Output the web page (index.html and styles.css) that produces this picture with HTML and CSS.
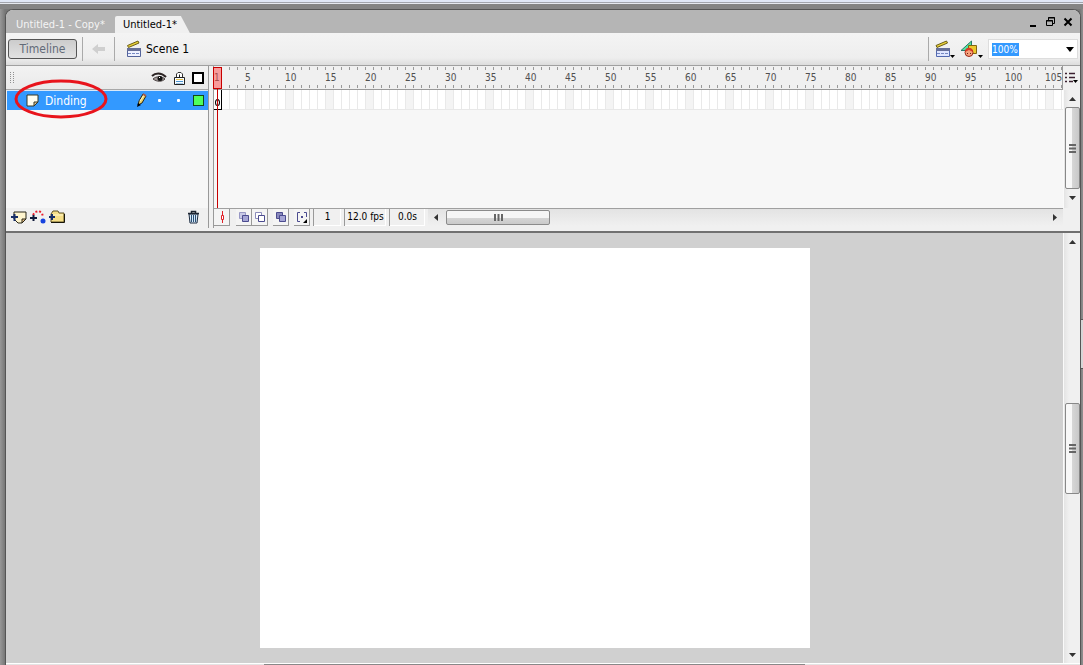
FILE: index.html
```
<!DOCTYPE html>
<html lang="en">
<head>
<meta charset="utf-8">
<title>Untitled-1*</title>
<link rel="stylesheet" href="styles.css">
</head>
<body>
<div class="backdrop"></div>
<button class="dock-handle" aria-label="Expand panels"></button>
<main class="window">
  <header class="tabs">
    <button class="tab">Untitled-1 - Copy*</button>
    <button class="tab tab-active">Untitled-1*</button>
    <div class="window-buttons">
      <button aria-label="Minimize"><svg width="10" height="12"><path d="M2 10h6" stroke="#000" stroke-width="2"/></svg></button>
      <button aria-label="Restore"><svg width="11" height="12" fill="none" stroke="#000"><path d="M3.500 4V1.500h6v6H8M3 2h7"/><path d="M1.500 4.500h6v5h-6zM1 5h7"/></svg></button>
      <button aria-label="Close"><svg width="10" height="12"><path d="M1.500 2.500l7 7m0-7l-7 7" stroke="#000" stroke-width="2"/></svg></button>
    </div>
  </header>

  <nav class="toolbar">
    <button class="timeline-toggle">Timeline</button>
    <span class="rule"></span>
    <button class="back" aria-label="Back"><svg width="13" height="10"><path d="M0 5l6-5v3h7v4H6v3z" fill="#cfcfcf"/></svg></button>
    <span class="rule"></span>
    <button class="scene">
      <svg width="16" height="18"><path d="M1.500 8.500h13v8h-13z" fill="#eef1ff" stroke="#53639b"/><path d="M1 8h14v3H1z" fill="#666f98"/><path d="M2 13.500h12" stroke="#7689c3" stroke-dasharray="3 1"/><path d="M1.500 5.500L12 1l1 2L2.500 7.500z" fill="#ead238" stroke="#6b5d18"/></svg>
      Scene 1</button>
    <div class="toolbar-right">
      <span class="rule"></span>
      <button aria-label="Edit scene"><svg width="21" height="20"><path d="M2.500 9.500h13v8h-13z" fill="#dfe6ff" stroke="#5269b0"/><path d="M2 9h14v3H2z" fill="#666f98"/><path d="M3 14.500h12" stroke="#7689c3" stroke-dasharray="3 1"/><path d="M2 6.500L12.500 2l1 2L3 8.500z" fill="#ead238" stroke="#6b5d18"/><path d="M16 16h5l-2.500 3z"/></svg></button>
      <button aria-label="Edit symbols"><svg width="23" height="20"><path d="M1 11.500L11.500 2v9.500z" fill="#54e4a2" stroke="#287a68"/><path d="M8.500 6.500h8v8h-8z" fill="#ecc62c" stroke="#806614"/><circle cx="9" cy="13.500" r="4" fill="#f7a27c" stroke="#9b291a"/><path d="M5 13c0-5 7-6 8 0l-4-2z" fill="#d93924"/><path d="M7 14.500h1m2 0h1" stroke="#642315"/><path d="M18 16h5l-2.500 3z"/></svg></button>
      <div class="zoom-box">
        <input aria-label="Zoom" value="100%">
        <button aria-label="Zoom levels"><svg width="8" height="5"><path d="M0 0h8L4 5z"/></svg></button>
      </div>
    </div>
  </nav>

  <section class="timeline" aria-label="Timeline">
    <div class="layers">
      <div class="layer-head">
        <svg class="grip" width="6" height="12"><path d="M1.500 0v12M4.500 0v12" stroke="#909090" stroke-dasharray="1 1"/></svg>
        <button aria-label="Show or hide all"><svg width="16" height="12"><path d="M1 4c3-3 9-4 14 1" fill="none" stroke="#2c2424" stroke-width="2"/><path d="M2 7c3-3 9-3 12 0-3 3-8 3-12 0z" fill="#a49c9c" stroke="#4c4444"/><circle cx="9" cy="6.500" r="2.500" fill="#111"/><path d="M8 5.500h1" stroke="#fff"/></svg></button>
        <button aria-label="Lock or unlock all"><svg width="11" height="14"><path d="M2.500 6V3l1.500-1.500h3L8.500 3v3" fill="#fff" stroke="#333"/><path d="M5.500 3.500v3" stroke="#222"/><path d="M.5 6.500h10v7H.5z" fill="#f6fbff" stroke="#222"/><path d="M2 8.500h7" stroke="#e3c14f"/><path d="M2 10.500h7" stroke="#4e94cf"/><path d="M2 12.500h7" stroke="#9dc6e6"/></svg></button>
        <button aria-label="Outline all layers"><span class="outline-box"></span></button>
      </div>
      <div class="layer">
        <svg width="14" height="13"><path d="M1 1h11v7l-4 4H1z" fill="#fffef1" stroke="#353827"/><path d="M12 8l-4 4V8z" fill="#e3c591" stroke="#353827"/></svg>
        <span class="layer-name">Dinding</span>
        <svg width="12" height="15"><path d="M2 12l1-4 4-7 3 2-4 7z" fill="#eed267" stroke="#27251a"/><path d="M4 8l4-6" stroke="#fff9cf"/><path d="M1 14l1-4 3 2z"/><path d="M7 1l3 2" stroke="#a85b4b" stroke-width="2"/></svg>
        <span class="dot"></span>
        <span class="dot"></span>
        <span class="colour-box"></span>
      </div>
      <div class="empty"></div>
      <div class="layer-tools">
        <button aria-label="Insert layer"><svg width="16" height="14"><path d="M3 2h12v7l-4 4H7L3 9z" fill="#fff5ce" stroke="#292719"/><path d="M15 9l-4 4V9z" fill="#e7bb82" stroke="#292719"/><path d="M0 7h7M3.500 4v7" stroke="#162d68" stroke-width="2"/></svg></button>
        <button aria-label="Add motion guide"><svg width="16" height="14"><path d="M3 5l2-3 4-1 3 2 1 4" fill="none" stroke="#eb1d2d" stroke-width="2" stroke-dasharray="2 2"/><path d="M0 8h7M3.500 5v6" stroke="#111a3a" stroke-width="2"/><circle cx="13" cy="11" r="2.500" fill="#1743df"/></svg></button>
        <button aria-label="Insert layer folder"><svg width="16" height="14"><path d="M2 4l2-3h5l1 2h5v9H2z" fill="#f6df88" stroke="#5c5124"/><path d="M3 5h11" stroke="#fff8cc"/><path d="M2 12.500h13.500V4" fill="none" stroke="#171408"/><path d="M0 7h6M3 4v6" stroke="#162d68" stroke-width="2"/></svg></button>
        <button class="trash" aria-label="Delete layer"><svg width="13" height="14"><path d="M2 4h9l-1 9H3z" fill="#d8eafa" stroke="#1e2d42"/><path d="M4.500 5v7M6.500 5v7M8.500 5v7" stroke="#294f75"/><path d="M1 3.500h11M4.500 3V1.500h4V3" fill="none" stroke="#1c2430" stroke-width="1.500"/></svg></button>
      </div>
    </div>

    <div class="frames">
      <div class="ruler">
        <span class="first">1</span><span>5</span><span>10</span><span>15</span><span>20</span><span>25</span><span>30</span><span>35</span><span>40</span><span>45</span><span>50</span><span>55</span><span>60</span><span>65</span><span>70</span><span>75</span><span>80</span><span>85</span><span>90</span><span>95</span><span>100</span><span>105</span>
      </div>
      <div class="track"><span class="keyframe"></span></div>
      <div class="empty"></div>
      <div class="playhead"></div>
      <div class="status">
        <button class="tool" aria-label="Center frame"><svg width="14" height="14"><path d="M7.500 1v12" stroke="#e02028"/><path d="M6.500 5.500h2v4h-2z" fill="#fff" stroke="#e02028"/></svg></button>
        <span class="tool-group">
          <button class="tool" aria-label="Onion skin"><svg width="14" height="14"><path d="M2.500 2.500h6v6h-6z" fill="#c8c9e6" stroke="#9797c4"/><path d="M5.500 5.500h6v6h-6z" fill="#a5a5d5" stroke="#4b4b8f"/></svg></button>
          <button class="tool" aria-label="Onion skin outlines"><svg width="14" height="14"><path d="M2.500 2.500h6v6h-6z" fill="#fff" stroke="#8b8bbb"/><path d="M5.500 5.500h6v6h-6z" fill="#fff" stroke="#4b4b8f"/></svg></button>
        </span>
        <button class="tool" aria-label="Edit multiple frames"><svg width="14" height="14"><path d="M2.500 2.500h6v6h-6z" fill="#8989bd" stroke="#4b4b8f"/><path d="M5.500 5.500h6v6h-6z" fill="#a5a5d5" stroke="#4b4b8f"/></svg></button>
        <button class="tool" aria-label="Modify onion markers"><svg width="14" height="14"><path d="M5 2.500H2.500v9H5M9 2.500h2.500V7" fill="none" stroke="#4b4b8f"/><path d="M6 6h2v2H6z" fill="#4b4b8f"/><path d="M12 9v4H8z"/></svg></button>
        <output class="field frame-no">1</output>
        <output class="field rate">12.0 fps</output>
        <output class="field elapsed">0.0s</output>
        <div class="hscroll">
          <button aria-label="Scroll left"><svg width="4" height="7"><path d="M4 0v7L0 3.500z" fill="#333"/></svg></button>
          <div class="hthumb"><svg width="9" height="7"><path d="M1 0v7M4.500 0v7M8 0v7" stroke="#666" stroke-width="2"/></svg></div>
          <button class="scroll-right" aria-label="Scroll right"><svg width="4" height="7"><path d="M0 0v7l4-3.500z" fill="#333"/></svg></button>
        </div>
      </div>
    </div>

    <div class="timeline-side">
      <button class="view-menu" aria-label="Frame view"><svg width="13" height="12"><path d="M0 1.500h2M0 5.500h2M0 9.500h2M4 1.500h6M4 5.500h6M4 9.500h4" stroke="#3b2030" stroke-width="1.500"/><path d="M8 8h5l-2.500 3z"/></svg></button>
      <div class="vscroll">
        <button aria-label="Scroll up"><svg width="7" height="4"><path d="M0 4h7L3.500 0z" fill="#333"/></svg></button>
        <div class="vthumb"><svg width="7" height="9"><path d="M0 1h7M0 4.500h7M0 8h7" stroke="#666" stroke-width="2"/></svg></div>
        <button aria-label="Scroll down"><svg width="7" height="4"><path d="M0 0h7L3.500 4z" fill="#333"/></svg></button>
      </div>
    </div>
  </section>

  <section class="workspace" aria-label="Stage">
    <div class="pasteboard"><div class="stage"></div></div>
    <div class="vscroll">
      <button aria-label="Scroll up"><svg width="7" height="4"><path d="M0 4h7L3.500 0z" fill="#333"/></svg></button>
      <div class="vthumb"><svg width="7" height="9"><path d="M0 1h7M0 4.500h7M0 8h7" stroke="#666" stroke-width="2"/></svg></div>
      <button aria-label="Scroll down"><svg width="7" height="4"><path d="M0 0h7L3.500 4z" fill="#333"/></svg></button>
    </div>
  </section>
  <div class="bottom-scroll"><span></span></div>
  <svg class="annotation" width="94" height="41"><ellipse cx="47" cy="20" rx="45" ry="18" fill="none" stroke="#e8141c" stroke-width="3"/></svg>
</main>
</body>
</html>
```

FILE: styles.css
```
* { box-sizing: border-box; }
body {
  margin: 0;
  height: 100vh;
  overflow: hidden;
  display: flex;
  flex-direction: column;
  position: relative;
  background: linear-gradient(90deg, #989898, #777 5px, #777 calc(100% - 3px), #909090);
  font: 11px/14px Tahoma, "DejaVu Sans Condensed", "DejaVu Sans", sans-serif;
  color: #000;
}
button {
  border: 0;
  padding: 0;
  background: none;
  font: inherit;
  color: inherit;
  display: flex;
  align-items: center;
  justify-content: center;
}
svg { display: block; flex: none; }
.backdrop {
  height: 9px;
  flex: none;
  border-top: 2px solid #e0e7f6;
  background: linear-gradient(#a2a5ad 1px, #e6e9f0 1px, #e6e9f0 2px, #848484 2px);
}
.dock-handle {
  position: absolute;
  right: 0;
  top: 319px;
  width: 3px;
  height: 50px;
  background: #d6d6d6;
  border: solid #555;
  border-width: 1px 0;
}
.window {
  flex: 1;
  min-height: 0;
  margin: 0 2px 0 5px;
  border: 1px solid #555;
  border-bottom: 0;
  border-radius: 8px 8px 0 0;
  background: #f0f0f0;
  display: flex;
  flex-direction: column;
  position: relative;
}

.tabs {
  height: 23px;
  flex: none;
  display: flex;
  align-items: flex-end;
  background: #b5b5b5;
  border-radius: 7px 7px 0 0;
}
.tab { height: 17px; padding: 0 10px; color: #f4f4f4; }
.tab-active {
  padding: 0 13px 0 8px;
  color: #000;
  background: #f0f0f0;
  border-radius: 2px 0 0 0;
  clip-path: polygon(0 0, calc(100% - 9px) 0, 100% 100%, 0 100%);
}
.window-buttons { margin-left: auto; display: flex; gap: 7px; padding: 0 7px 5px 0; }

.toolbar {
  height: 33px;
  flex: none;
  display: flex;
  align-items: center;
  gap: 5px;
  padding: 0 2px;
  background: linear-gradient(#f4f4f4, #eee 25px, #dcdcdc);
  border-bottom: 1px solid #a0a0a0;
  font-size: 12px;
}
.timeline-toggle {
  width: 69px;
  height: 20px;
  border: 1px solid #555;
  border-radius: 3px;
  background: linear-gradient(#ccc, #e2e2e2);
  color: #626a78;
}
.rule { width: 1px; height: 24px; background: #aaa; }
.back { width: 21px; height: 24px; }
.scene { gap: 4px; padding-left: 6px; }
.toolbar-right { margin-left: auto; display: flex; align-items: center; gap: 5px; }
.zoom-box {
  width: 90px;
  height: 20px;
  display: flex;
  align-items: center;
  padding: 0 3px;
  border: 1px solid #ddd;
  background: #fff;
}
.zoom-box input {
  width: 27px;
  height: 13px;
  padding: 0;
  border: 0;
  background: #3399ff;
  color: #fff;
  font: 10px/13px Tahoma, "DejaVu Sans Condensed", sans-serif;
}
.zoom-box button { margin-left: auto; }

.timeline {
  height: 167px;
  flex: none;
  display: grid;
  grid-template-columns: 203px minmax(0, 1fr) 17px;
  border-bottom: 2px solid #707070;
}
.layers {
  height: 162px;
  display: grid;
  grid-template-rows: 24px 20px 1fr 20px;
  border-right: 1px solid #999;
}
.layer-head {
  display: flex;
  align-items: center;
  gap: 7px;
  padding: 0 4px 0 3px;
  border-bottom: 1px solid #a8a8a8;
  background: linear-gradient(#f2f2f2, #eaeaea);
}
.grip { margin-right: auto; }
.layer-head button { min-width: 11px; }
.outline-box { width: 12px; height: 12px; border: 2px solid #000; background: #fff; }
.layer {
  display: flex;
  align-items: center;
  margin-left: 1px;
  padding: 0 4px 0 19px;
  border-top: 1px solid #d8e8f8;
  background: #3399ff;
  color: #fff;
  font-size: 12px;
}
.layer-name { flex: 1; padding-left: 5px; }
.dot { width: 3px; height: 3px; margin-left: 10px; border-radius: 1px; background: #fff; }
.dot + .dot { margin-left: 16px; }
.colour-box { width: 11px; height: 11px; margin-left: 13px; border: 1px solid #124816; background: #4fff5c; }
.empty { background: #f7f7f7; }
.layer-tools { display: flex; align-items: center; gap: 3px; padding: 0 8px 2px 5px; }
.trash { margin-left: auto; }

.frames {
  height: 162px;
  margin-left: 4px;
  display: grid;
  grid-template-rows: 24px 20px 1fr 20px;
  grid-template-columns: minmax(0, 1fr);
  position: relative;
  border-left: 1px solid #999;
}
.ruler {
  display: flex;
  align-items: center;
  overflow: hidden;
  border-right: 1px solid #999;
  border-bottom: 1px solid #999;
  color: #505050;
  font-size: 10px;
  background:
    repeating-linear-gradient(90deg, transparent 0 7px, #999 7px 8px) 0 1px / 100% 3px no-repeat,
    repeating-linear-gradient(90deg, transparent 0 7px, #999 7px 8px) 0 19px / 100% 3px no-repeat,
    #f0f0f0;
}
.ruler span { flex: 0 0 40px; }
.ruler .first { flex-basis: 31px; }
.track {
  border-bottom: 1px solid #e8e8e8;
  background:
    repeating-linear-gradient(90deg, transparent 0 7px, #e9e9e9 7px 8px),
    repeating-linear-gradient(90deg, #fff 0 32px, #f4f4f4 32px 40px);
}
.keyframe {
  display: flex;
  width: 8px;
  height: 20px;
  padding: 0 1px 3px;
  align-items: flex-end;
  border: solid #000;
  border-width: 0 1px 1px 0;
}
.keyframe::before { content: ""; width: 5px; height: 5px; border: 1px solid #000; border-radius: 50%; }
.track { background-position: 0 0; }
.playhead {
  position: absolute;
  left: -1px;
  top: 1px;
  width: 9px;
  height: 22px;
  border: 1px solid #c80000;
  background: rgba(255, 72, 72, .5);
}
.playhead::after { content: ""; position: absolute; left: 3px; top: 21px; width: 1px; height: 119px; background: #c80000; }

.status { display: flex; align-items: stretch; padding-bottom: 2px; border-top: 1px solid #a0a0a0; }
.tool {
  width: 16px;
  border: solid #999;
  border-width: 0 1px 1px 0;
  background: #f4f4f4;
}
.tool-group { display: flex; margin: 0 5px 0 6px; }
.status > .tool + .tool { margin-left: 5px; }
.field {
  margin-left: 3px;
  padding-top: 1px;
  text-align: center;
  font-size: 10px;
  border: solid #999;
  border-width: 0 0 0 1px;
  box-shadow: inset -1px -1px #fff;
}
.frame-no { width: 28px; }
.rate { width: 42px; }
.elapsed { width: 36px; }
.hscroll { flex: 1; display: flex; align-items: center; margin-left: 3px; padding: 0 6px; background: linear-gradient(#e3e3e3, #f0f0f0); }
.hthumb {
  width: 104px;
  height: 15px;
  margin-left: 8px;
  display: flex;
  align-items: center;
  justify-content: center;
  border: 1px solid #8b8b8b;
  border-radius: 2px;
  background: linear-gradient(#f6f6f6 50%, #d5d5d5 55%, #cacaca);
}
.scroll-right { margin-left: auto; }

.timeline-side { height: 142px; display: flex; flex-direction: column; }
.view-menu { height: 24px; }
.vscroll {
  flex: 1;
  min-height: 0;
  width: 17px;
  display: flex;
  flex-direction: column;
  align-items: center;
  border-left: 1px solid #fafafa;
  background: linear-gradient(90deg, #e4e4e4, #f0f0f0 5px);
}
.vscroll button { height: 17px; flex: none; }
.vthumb {
  width: 15px;
  height: 82px;
  flex: none;
  display: flex;
  align-items: center;
  justify-content: center;
  border: 1px solid #888;
  border-radius: 2px;
  background: linear-gradient(90deg, #f8f8f8 45%, #d6d6d6 50%, #c8c8c8);
}

.workspace { flex: 1; min-height: 0; display: flex; background: #d0d0d0; }
.pasteboard {
  flex: 1;
  min-width: 0;
  display: flex;
  align-items: center;
  justify-content: center;
}
.stage { flex: none; width: 550px; height: 400px; background: #fff; }
.workspace .vscroll { flex: none; }
.workspace .vthumb { height: 91px; margin: auto 0; }
.bottom-scroll { height: 2px; flex: none; display: flex; justify-content: center; border-top: 1px solid #fff; background: #e4e4e4; }
.bottom-scroll span { width: 541px; margin-right: 17px; background: #888; }
.annotation { position: absolute; left: 8px; top: 69px; }
```
